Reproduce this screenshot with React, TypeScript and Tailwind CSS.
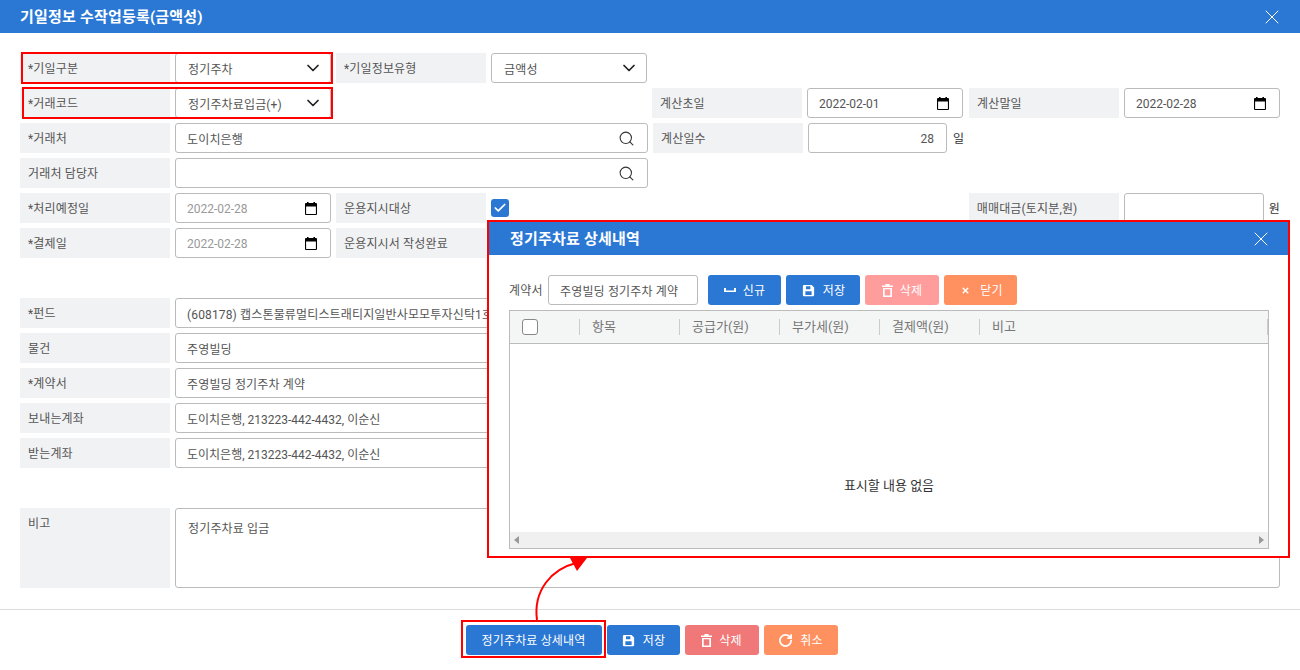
import { Check, ChevronDown, RotateCw, Search, X } from "lucide-react";
import type { ReactNode } from "react";

const SaveIcon = () => (
  <svg viewBox="0 0 24 24" className="h-[15px] w-[15px]" fill="currentColor">
    <path d="M17 3H5a2 2 0 0 0-2 2v14a2 2 0 0 0 2 2h14a2 2 0 0 0 2-2V7l-4-4zM8 5h7v5H8V5zm9 14H7v-6h10v6z" fillRule="evenodd" />
  </svg>
);

const TrashIcon = () => (
  <svg viewBox="0 0 11 13" className="h-[13px] w-[11px]" fill="currentColor">
    <path d="M3.5 0h4v1.5H11V3H0V1.5h3.5zM1 4h9v9H1V4zm1.7 1.2v6.2h5.6V5.2z" fillRule="evenodd" />
  </svg>
);

const CalendarIcon = () => (
  <svg viewBox="0 0 12 13" className="mr-px h-[13px] w-[12px] text-black" fill="currentColor">
    <path d="M2 0h1.6v1h4.8V0H10v1h1a1 1 0 0 1 1 1v10a1 1 0 0 1-1 1H1a1 1 0 0 1-1-1V2a1 1 0 0 1 1-1h1zM1.1 4.6v7.3h9.8V4.6z" fillRule="evenodd" />
  </svg>
);

function Label({ children }: { children: ReactNode }) {
  return <div className="flex h-[30px] w-[150px] shrink-0 items-center bg-[#f1f2f4] px-2 pt-[2px] text-[#555]">{children}</div>;
}

function Field({ children, className = "" }: { children?: ReactNode; className?: string }) {
  return (
    <div className={`flex h-[30px] items-center justify-between overflow-hidden rounded-[3px] border border-[#bbb] bg-white pr-[12px] pl-[11px] whitespace-nowrap text-[#555] ${className}`}>
      {children}
    </div>
  );
}

function Txt({ children }: { children: ReactNode }) {
  return <span className="block pt-[3px]">{children}</span>;
}

function Select({ value }: { value: string }) {
  return (
    <Field className="w-[156px]">
      <span className="block pt-[3px] pl-px">{value}</span>
      <ChevronDown size={20} strokeWidth={2.1} className="-mr-[5px] text-[#222]" />
    </Field>
  );
}

function DateField({ value, muted }: { value: string; muted?: boolean }) {
  return (
    <Field className="w-[156px] shrink-0 tracking-normal">
      <span className={`block pt-[2px] ${muted ? "text-[#999]" : "text-[#555]"}`}>{value}</span>
      <CalendarIcon />
    </Field>
  );
}

function SearchField({ value }: { value?: string }) {
  return (
    <Field className="w-[473px]">
      <Txt>{value}</Txt>
      <Search size={17} strokeWidth={1.5} className="text-[#333]" />
    </Field>
  );
}

function Btn({ icon, label, className }: { icon?: ReactNode; label: string; className: string }) {
  return (
    <button className={`flex h-[30px] shrink-0 items-center justify-center gap-[7px] rounded-[3px] text-white ${className}`}>
      {icon}
      <span className="pt-[2px]">{label}</span>
    </button>
  );
}

const columns = ["항목", "공급가(원)", "부가세(원)", "결제액(원)", "비고"];

export default function App() {
  return (
    <div className="relative h-[670px] w-full overflow-hidden bg-white text-[12px] tracking-[0.15px] font-['Roboto','Noto_Sans_CJK_KR',sans-serif]">
      <div className="flex h-[33px] items-center justify-between bg-[#2b78d4] pr-[16px] pl-[20px] text-white">
        <h1 className="pt-px text-[15px] font-bold tracking-[0.2px]">기일정보 수작업등록(금액성)</h1>
        <X size={24} strokeWidth={1} />
      </div>

      <div className="flex flex-col gap-[5px] px-[20px] pt-[20px]">
        <div className="flex gap-[5px]">
          <div className="relative flex gap-[5px]">
            <Label>*기일구분</Label>
            <Select value="정기주차" />
            <div className="absolute -top-px -right-[2px] -bottom-px left-px border-2 border-[#ff0000]" />
          </div>
          <Label>*기일정보유형</Label>
          <Select value="금액성" />
        </div>

        <div className="flex gap-[5px]">
          <div className="relative flex gap-[5px]">
            <Label>*거래코드</Label>
            <Select value="정기주차료입금(+)" />
            <div className="absolute -top-px -right-[2px] -bottom-px left-[2px] border-2 border-[#ff0000]" />
          </div>
          <div className="ml-auto flex gap-[5px]">
            <Label>계산초일</Label>
            <DateField value="2022-02-01" />
            <div className="ml-px"><Label>계산말일</Label></div>
            <DateField value="2022-02-28" />
          </div>
        </div>

        <div className="flex gap-[5px]">
          <Label>*거래처</Label>
          <SearchField value="도이치은행" />
          <Label>계산일수</Label>
          <Field className="w-[139px] justify-end tracking-normal"><span className="block pt-[2px]">28</span></Field>
          <span className="ml-px self-center pt-[2px] text-[#333]">일</span>
        </div>

        <div className="flex gap-[5px]">
          <Label>거래처 담당자</Label>
          <SearchField />
        </div>

        <div className="flex gap-[5px]">
          <Label>*처리예정일</Label>
          <DateField value="2022-02-28" muted />
          <Label>운용지시대상</Label>
          <div className="mt-[6px] flex h-[18px] w-[18px] items-center justify-center rounded-[3px] bg-[#2b78d4]">
            <Check size={14} strokeWidth={3} className="text-white" />
          </div>
          <div className="ml-auto flex gap-[5px]">
            <Label>매매대금(토지분,원)</Label>
            <Field className="w-[140px]" />
            <span className="self-center pt-[2px] text-[#333]">원</span>
          </div>
        </div>

        <div className="mb-[35px] flex gap-[5px]">
          <Label>*결제일</Label>
          <DateField value="2022-02-28" muted />
          <Label>운용지시서 작성완료</Label>
        </div>

        <div className="flex gap-[5px]">
          <Label>*펀드</Label>
          <Field className="flex-1"><Txt>(608178) 캡스톤물류멀티스트래티지일반사모모투자신탁1호</Txt></Field>
        </div>
        <div className="flex gap-[5px]">
          <Label>물건</Label>
          <Field className="flex-1"><Txt>주영빌딩</Txt></Field>
        </div>
        <div className="flex gap-[5px]">
          <Label>*계약서</Label>
          <Field className="flex-1"><Txt>주영빌딩 정기주차 계약</Txt></Field>
        </div>
        <div className="flex gap-[5px]">
          <Label>보내는계좌</Label>
          <Field className="flex-1 tracking-normal"><Txt>도이치은행, 213223-442-4432, 이순신</Txt></Field>
        </div>
        <div className="mb-[35px] flex gap-[5px]">
          <Label>받는계좌</Label>
          <Field className="flex-1 tracking-normal"><Txt>도이치은행, 213223-442-4432, 이순신</Txt></Field>
        </div>

        <div className="flex gap-[5px]">
          <div className="h-[80px] w-[150px] shrink-0 bg-[#f1f2f4] px-2 pt-[7px] text-[#555]">비고</div>
          <div className="h-[80px] flex-1 rounded-[3px] border border-[#bbb] px-[12px] pt-[11px] text-[#555]">정기주차료 입금</div>
        </div>
      </div>

      <div className="mt-[21px] flex justify-center gap-[5px] border-t border-[#ddd] pt-[15px] pl-[3px]">
        <div className="relative">
          <Btn label="정기주차료 상세내역" className="w-[136px] bg-[#2b78d4]" />
          <div className="absolute -top-[5px] -right-[4px] -bottom-[3px] -left-[5px] border-2 border-[#ff0000]" />
        </div>
        <Btn icon={<SaveIcon />} label="저장" className="w-[73px] bg-[#2b78d4]" />
        <Btn icon={<TrashIcon />} label="삭제" className="w-[74px] bg-[#f07878]" />
        <Btn icon={<RotateCw size={15} strokeWidth={2.8} />} label="취소" className="w-[74px] bg-[#ff9060]" />
      </div>

      {/* popup drawn over the form */}
      <div className="absolute top-[220px] left-[487px] flex h-[338px] w-[803px] flex-col border-2 border-[#ff0000] bg-white">
        <div className="flex h-[33px] shrink-0 items-center justify-between bg-[#2b78d4] pr-[15px] pl-[21px] text-white">
          <h2 className="pt-px text-[15px] font-bold tracking-[0.2px]">정기주차료 상세내역</h2>
          <X size={24} strokeWidth={1} />
        </div>
        <div className="flex items-center pt-[20px] pl-[20px] text-[#555]">
          <span className="w-[39px] shrink-0 pt-[2px]">계약서</span>
          <Field className="w-[150px] shrink-0"><Txt>주영빌딩 정기주차 계약</Txt></Field>
          <div className="ml-[10px] flex gap-[5px]">
            <Btn
              icon={<svg viewBox="0 0 12 6" className="h-[6px] w-[12px]" fill="currentColor"><path d="M0 1h2v2.5h8V1h2v4H0z" /></svg>}
              label="신규"
              className="w-[73px] bg-[#2b78d4]"
            />
            <Btn icon={<SaveIcon />} label="저장" className="w-[74px] bg-[#2b78d4]" />
            <Btn icon={<TrashIcon />} label="삭제" className="w-[74px] bg-[#ff9c9c]" />
            <Btn icon={<X size={9} strokeWidth={4} className="mx-[3px]" />} label="닫기" className="w-[73px] bg-[#ff9060]" />
          </div>
        </div>
        <div className="mt-[5px] ml-[20px] flex h-[239px] w-[760px] flex-col border border-[#bbb]">
          <div className="flex h-[33px] shrink-0 items-center border-b border-[#bbb] bg-[#f4f6f5] text-[13px] tracking-normal text-[#777]">
            <div className="w-[69px] shrink-0 pl-[12px]">
              <div className="h-[16px] w-[16px] rounded-[3px] border border-[#888] bg-white" />
            </div>
            {columns.map((col) => (
              <div key={col} className="h-[16px] w-[100px] shrink-0 border-l border-[#ccc] pl-[12px] leading-[16px]">{col}</div>
            ))}
            <div className="ml-auto h-[16px] w-px bg-[#ccc]" />
          </div>
          <div className="flex flex-1 items-center justify-center pt-[96px] text-[13px] tracking-normal text-[#333]">표시할 내용 없음</div>
          <div className="flex h-[16px] shrink-0 items-center justify-between bg-[#f0f0f0] px-[4px]">
            <span className="h-0 w-0 border-y-[4px] border-r-[5px] border-y-transparent border-r-[#999]" />
            <span className="h-0 w-0 border-y-[4px] border-l-[5px] border-y-transparent border-l-[#999]" />
          </div>
        </div>
      </div>

      {/* arrow from the button up to the popup */}
      <svg className="pointer-events-none absolute top-[555px] left-[530px] h-[70px] w-[60px]" viewBox="0 0 60 70" fill="none">
        <path d="M7 65C3 35 22 14 46 8" stroke="#ff0000" strokeWidth="2" />
        <path d="M40 3L57 3L47 16Z" fill="#ff0000" />
      </svg>
    </div>
  );
}
